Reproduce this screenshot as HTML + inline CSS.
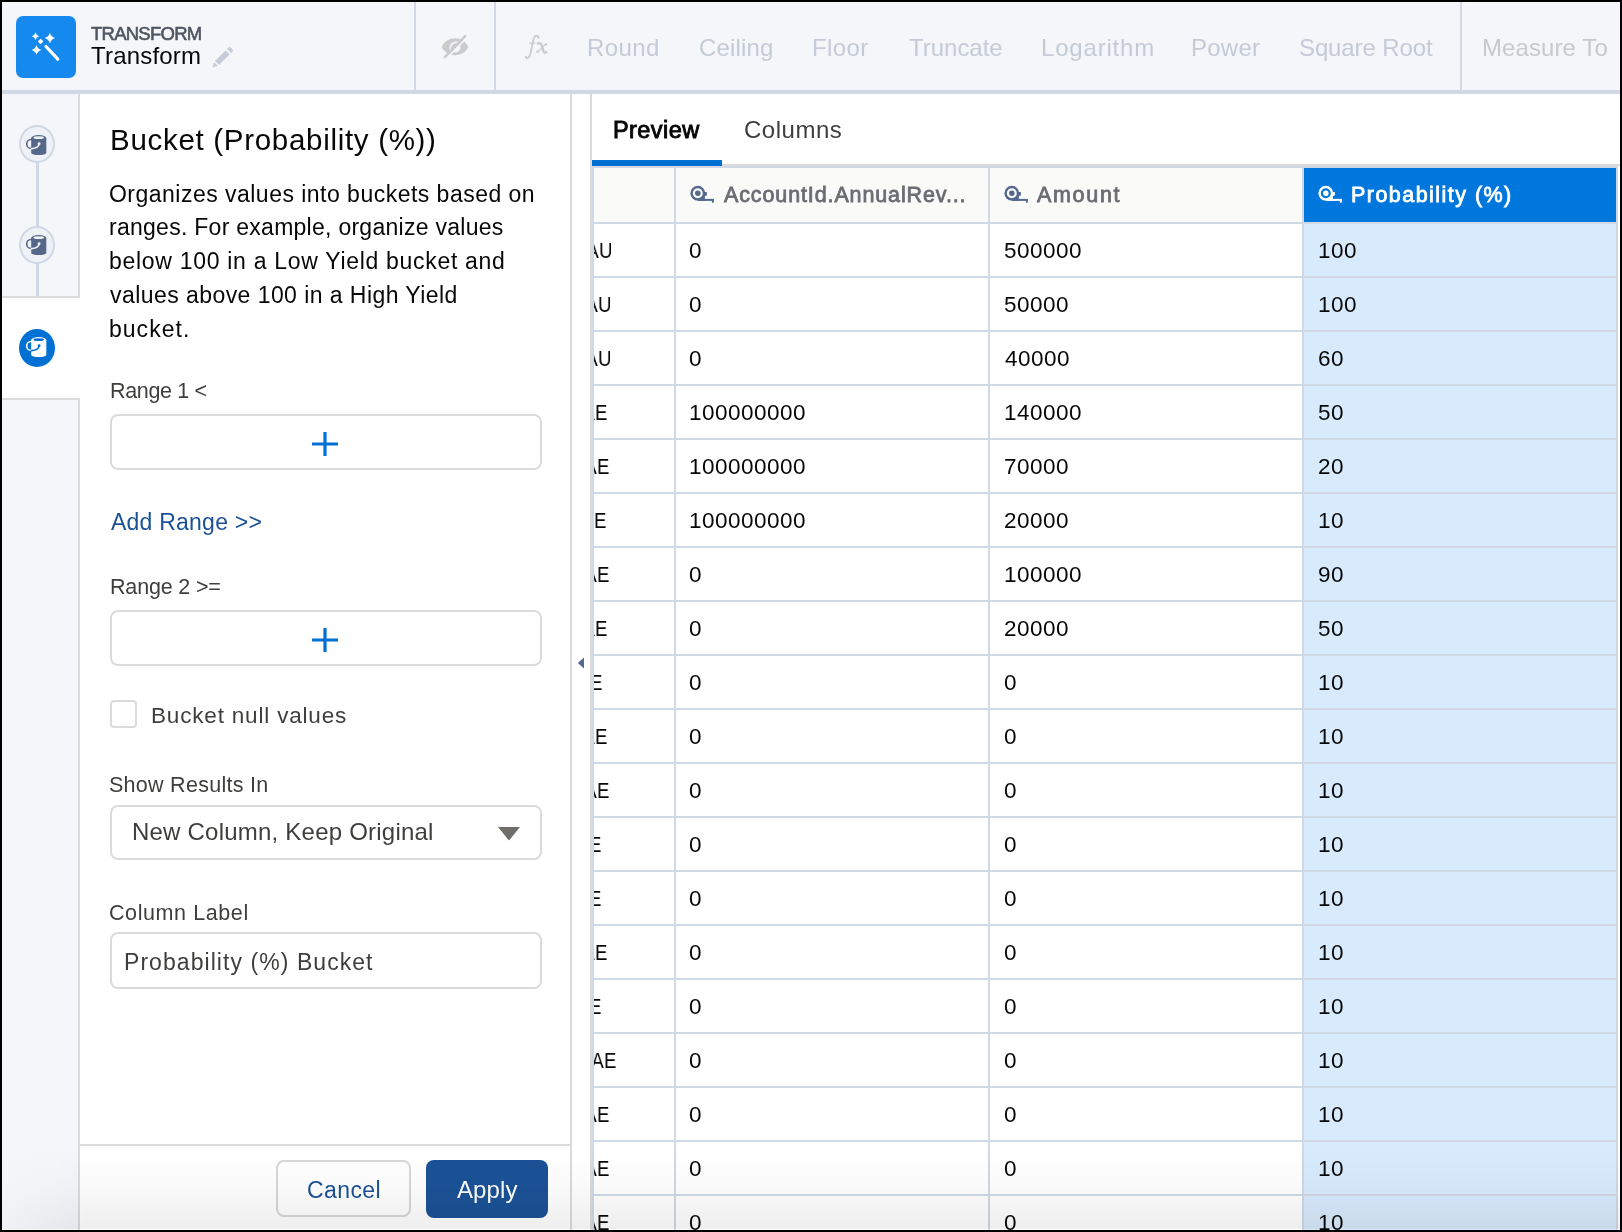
<!DOCTYPE html>
<html><head><meta charset="utf-8">
<style>
html,body{margin:0;padding:0;}
body{width:1622px;height:1232px;background:#000;position:relative;overflow:hidden;font-family:"Liberation Sans",sans-serif;}
#app{position:absolute;left:2px;top:2px;width:1618px;height:1228px;background:#fff;overflow:hidden;}
.a{position:absolute;}
.t{position:absolute;white-space:nowrap;line-height:1;font-family:"Liberation Sans",sans-serif;will-change:transform;}
.circ{position:absolute;width:37px;height:37px;border-radius:50%;}
</style></head>
<body>
<div id="app">
<div class="a" style="left:0px;top:0px;width:1618px;height:88px;background:#f4f6f9"></div>
<div class="a" style="left:0px;top:88px;width:1618px;height:4px;background:#d0d8e6"></div>
<div class="a" style="left:14px;top:14px;width:60px;height:62px;background:#1589ee;border-radius:7px"></div>
<svg class="a" style="left:14px;top:14px" width="60" height="62" viewBox="0 0 60 62">
<path fill="#fff" d="M19.50 16.60 Q20.31 19.49 23.20 20.30 Q20.31 21.11 19.50 24.00 Q18.69 21.11 15.80 20.30 Q18.69 19.49 19.50 16.60Z M33.90 16.80 Q35.07 20.93 39.20 22.10 Q35.07 23.27 33.90 27.40 Q32.73 23.27 28.60 22.10 Q32.73 20.93 33.90 16.80Z M20.50 29.00 Q21.58 32.82 25.40 33.90 Q21.58 34.98 20.50 38.80 Q19.42 34.98 15.60 33.90 Q19.42 32.82 20.50 29.00Z"/>
<rect x="22.6" y="23.4" width="4" height="4" rx="0.8" fill="#fff" transform="rotate(45 24.6 25.4)"/>
<line x1="30" y1="30.5" x2="41.8" y2="43.2" stroke="#fff" stroke-width="3.2" stroke-linecap="round"/>
</svg>
<svg class="a" style="left:209px;top:43px" width="24" height="24" viewBox="0 0 24 24">
<path fill="#c5ccd8" d="M17.6 2.4 Q18.6 1.6 19.6 2.4 L21.6 4.4 Q22.4 5.4 21.6 6.4 L20 8 L16 4Z M14.6 5.4 L18.6 9.4 L8 20 L4 16Z M3.2 17.2 L6.8 20.8 L1.6 22.4Z"/>
</svg>
<div class="a" style="left:412px;top:0px;width:2px;height:88px;background:#d2d8e8"></div>
<div class="a" style="left:492px;top:0px;width:2px;height:88px;background:#d2d8e8"></div>
<div class="a" style="left:1458px;top:0px;width:2px;height:88px;background:#d2d8e8"></div>
<svg class="a" style="left:434px;top:28px" width="38" height="32" viewBox="436 30 38 32">
<defs>
<mask id="eyeA" maskUnits="userSpaceOnUse" x="436" y="30" width="38" height="32"><rect x="436" y="30" width="38" height="32" fill="#fff"/><polygon points="438.71,65.13 473.08,29.92 501.70,57.86 467.33,93.07" fill="#000"/><path d="M450.3 49 A5.8 5.8 0 0 1 456.9 42.4" stroke="#000" stroke-width="1.7" fill="none" stroke-linecap="round"/></mask>
<mask id="eyeB" maskUnits="userSpaceOnUse" x="436" y="30" width="38" height="32"><rect x="436" y="30" width="38" height="32" fill="#fff"/><polygon points="439.96,66.35 474.33,31.14 445.71,3.20 411.34,38.41" fill="#000"/><circle cx="455.6" cy="47.6" r="4.8" fill="#000"/></mask>
</defs>
<path fill="#cbcbcb" mask="url(#eyeA)" d="M441.8 47 C446.5 35.4 463.5 35.4 468.2 47 C463.5 58 446.5 58 441.8 47Z"/>
<path fill="#cbcbcb" mask="url(#eyeB)" d="M441.8 47 C446.5 35.4 463.5 35.4 468.2 47 C463.5 58 446.5 58 441.8 47Z"/>
<line x1="444.8" y1="57.1" x2="465.2" y2="36.2" stroke="#cbcbcb" stroke-width="2.5" stroke-linecap="round"/>
</svg>
<svg class="a" style="left:513px;top:26px" width="45" height="38" viewBox="515 28 45 38">
<g fill="none" stroke="#cbcbcb" stroke-linecap="round">
<path d="M538.4 37.4 C537.9 35.2 535.6 35.0 534.3 37.3 C532.8 40.2 531.9 47 530.7 52.8 C529.8 57.4 527.9 59.0 526.1 57.7" stroke-width="1.8"/>
<path d="M529.4 43.1 H535.0" stroke-width="1.1"/>
<path d="M537.9 43.4 C540.6 42.6 541.6 44.3 542.2 46.6 L543.2 50.6 C543.8 52.9 545.0 53.0 546.2 52.1" stroke-width="2.4"/>
<path d="M546.0 44.2 L537.3 52.1" stroke-width="1.1"/>
</g>
<g fill="#cbcbcb"><circle cx="538.3" cy="37.6" r="1.15"/><circle cx="526.0" cy="57.2" r="1.15"/><circle cx="546.0" cy="44.4" r="1.2"/><circle cx="537.5" cy="51.7" r="1.25"/></g>
</svg>
<div class="a" style="left:0px;top:92px;width:76px;height:1136px;background:#f4f6f9"></div>
<div class="a" style="left:76px;top:92px;width:2px;height:1136px;background:#dddbda"></div>
<div class="a" style="left:34px;top:158px;width:3px;height:70px;background:#d0d8e6"></div>
<div class="a" style="left:34px;top:260px;width:3px;height:36px;background:#d0d8e6"></div>
<div class="a" style="left:0px;top:294px;width:78px;height:2px;background:#dddbda"></div>
<div class="a" style="left:0px;top:296px;width:80px;height:100px;background:#fff"></div>
<div class="a" style="left:0px;top:396px;width:78px;height:2px;background:#dddbda"></div>
<div class="a" style="left:17px;top:122.8px;width:32px;height:34px;border-radius:50%;border:2px solid #d0d8e6;background:#eef1f6"></div>
<div class="a" style="left:17px;top:224px;width:32px;height:34px;border-radius:50%;border:2px solid #d0d8e6;background:#eef1f6"></div>
<div class="a" style="left:16.5px;top:326.6px;width:36.5px;height:38.5px;border-radius:50%;background:#0070d2"></div>
<svg class="a" style="left:24.0px;top:132.0px" width="22" height="22" viewBox="-5.2 -1 22 22"><ellipse cx="-0.3" cy="8.9" rx="4.2" ry="4.4" fill="none" stroke="#56688a" stroke-width="1.6"/><path d="M0 3 H15.1 V18 A7.55 2 0 0 1 0 18Z" fill="#56688a"/><ellipse cx="7.55" cy="3" rx="7.6" ry="3" fill="#56688a"/><ellipse cx="7.55" cy="2.7" rx="5.3" ry="1.4" fill="#eef1f6"/><path d="M7.8 8.8 Q7.6 13.2 0.3 13.6" fill="none" stroke="#eef1f6" stroke-width="1.6" stroke-linecap="round"/><circle cx="7.9" cy="8.8" r="1.45" fill="#eef1f6"/></svg>
<svg class="a" style="left:24.0px;top:232.0px" width="22" height="22" viewBox="-5.2 -1 22 22"><ellipse cx="-0.3" cy="8.9" rx="4.2" ry="4.4" fill="none" stroke="#56688a" stroke-width="1.6"/><path d="M0 3 H15.1 V18 A7.55 2 0 0 1 0 18Z" fill="#56688a"/><ellipse cx="7.55" cy="3" rx="7.6" ry="3" fill="#56688a"/><ellipse cx="7.55" cy="2.7" rx="5.3" ry="1.4" fill="#eef1f6"/><path d="M7.8 8.8 Q7.6 13.2 0.3 13.6" fill="none" stroke="#eef1f6" stroke-width="1.6" stroke-linecap="round"/><circle cx="7.9" cy="8.8" r="1.45" fill="#eef1f6"/></svg>
<svg class="a" style="left:24.0px;top:333.9px" width="22" height="22" viewBox="-5.2 -1 22 22"><ellipse cx="-0.3" cy="8.9" rx="4.2" ry="4.4" fill="none" stroke="#fff" stroke-width="1.6"/><path d="M0 3 H15.1 V18 A7.55 2 0 0 1 0 18Z" fill="#fff"/><ellipse cx="7.55" cy="3" rx="7.6" ry="3" fill="#fff"/><ellipse cx="7.55" cy="2.7" rx="5.3" ry="1.4" fill="#0070d2"/><path d="M7.8 8.8 Q7.6 13.2 0.3 13.6" fill="none" stroke="#0070d2" stroke-width="1.6" stroke-linecap="round"/><circle cx="7.9" cy="8.8" r="1.45" fill="#0070d2"/></svg>
<div class="a" style="left:568px;top:92px;width:2px;height:1136px;background:#dddbda"></div>
<div class="a" style="left:108px;top:412px;width:428px;height:52px;border:2px solid #dbdbdb;border-radius:8px;background:#fff"></div>
<div class="a" style="left:108px;top:608px;width:428px;height:52px;border:2px solid #dbdbdb;border-radius:8px;background:#fff"></div>
<div class="a" style="left:108px;top:803px;width:428px;height:51px;border:2px solid #dbdbdb;border-radius:8px;background:#fff"></div>
<div class="a" style="left:108px;top:930px;width:428px;height:53px;border:2px solid #dbdbdb;border-radius:8px;background:#fff"></div>
<svg class="a" style="left:310px;top:430px" width="26" height="24" viewBox="0 0 26 24"><path d="M13 0.5 V23.5 M0.5 12 H25.5" stroke="#0070d2" stroke-width="3.2" stroke-linecap="round" fill="none"/></svg>
<svg class="a" style="left:310px;top:626px" width="26" height="24" viewBox="0 0 26 24"><path d="M13 0.5 V23.5 M0.5 12 H25.5" stroke="#0070d2" stroke-width="3.2" stroke-linecap="round" fill="none"/></svg>
<div class="a" style="left:108px;top:698px;width:23px;height:24px;border:2px solid #dbdbdb;border-radius:4px;background:#fff"></div>
<svg class="a" style="left:494px;top:823px" width="26" height="16" viewBox="0 0 26 16"><path d="M2 2 H24 L13 15.5Z" fill="#706e6b"/></svg>
<div class="a" style="left:78px;top:1142px;width:490px;height:2px;background:#dddbda"></div>
<div class="a" style="left:274px;top:1158px;width:131px;height:53px;border:2px solid #d8d8d8;border-radius:8px;background:#fff"></div>
<div class="a" style="left:424px;top:1158px;width:122px;height:58px;background:#1b5297;border-radius:8px"></div>
<div class="a" style="left:588px;top:92px;width:2px;height:1136px;background:#dddbda"></div>
<div class="a" style="left:590px;top:164px;width:2px;height:1064px;background:#d0d8e6"></div>
<svg class="a" style="left:575px;top:655px" width="8" height="12" viewBox="0 0 8 12"><path d="M7 0.5 V11.5 L0.8 6Z" fill="#54698d"/></svg>
<div class="a" style="left:590px;top:162px;width:1028px;height:2px;background:#dddbda"></div>
<div class="a" style="left:590px;top:158px;width:130px;height:6px;background:#0070d2"></div>
<div class="a" style="left:590px;top:164px;width:1026px;height:2px;background:#d0d8e6"></div>
<div class="a" style="left:592px;top:166px;width:1024px;height:54px;background:#fafaf9"></div>
<div class="a" style="left:1302px;top:166px;width:312px;height:54px;background:#0077dc"></div>
<div class="a" style="left:1302px;top:222px;width:312px;height:1006px;background:#d8ebfc"></div>
<div class="a" style="left:592px;top:220px;width:1024px;height:2px;background:#d0d8e6"></div>
<div class="a" style="left:592px;top:274px;width:1024px;height:2px;background:#d0d8e6"></div>
<div class="a" style="left:592px;top:328px;width:1024px;height:2px;background:#d0d8e6"></div>
<div class="a" style="left:592px;top:382px;width:1024px;height:2px;background:#d0d8e6"></div>
<div class="a" style="left:592px;top:436px;width:1024px;height:2px;background:#d0d8e6"></div>
<div class="a" style="left:592px;top:490px;width:1024px;height:2px;background:#d0d8e6"></div>
<div class="a" style="left:592px;top:544px;width:1024px;height:2px;background:#d0d8e6"></div>
<div class="a" style="left:592px;top:598px;width:1024px;height:2px;background:#d0d8e6"></div>
<div class="a" style="left:592px;top:652px;width:1024px;height:2px;background:#d0d8e6"></div>
<div class="a" style="left:592px;top:706px;width:1024px;height:2px;background:#d0d8e6"></div>
<div class="a" style="left:592px;top:760px;width:1024px;height:2px;background:#d0d8e6"></div>
<div class="a" style="left:592px;top:814px;width:1024px;height:2px;background:#d0d8e6"></div>
<div class="a" style="left:592px;top:868px;width:1024px;height:2px;background:#d0d8e6"></div>
<div class="a" style="left:592px;top:922px;width:1024px;height:2px;background:#d0d8e6"></div>
<div class="a" style="left:592px;top:976px;width:1024px;height:2px;background:#d0d8e6"></div>
<div class="a" style="left:592px;top:1030px;width:1024px;height:2px;background:#d0d8e6"></div>
<div class="a" style="left:592px;top:1084px;width:1024px;height:2px;background:#d0d8e6"></div>
<div class="a" style="left:592px;top:1138px;width:1024px;height:2px;background:#d0d8e6"></div>
<div class="a" style="left:592px;top:1192px;width:1024px;height:2px;background:#d0d8e6"></div>
<div class="a" style="left:592px;top:1246px;width:1024px;height:2px;background:#d0d8e6"></div>
<div class="a" style="left:672px;top:166px;width:2px;height:1062px;background:#d0d8e6"></div>
<div class="a" style="left:986px;top:166px;width:2px;height:1062px;background:#d0d8e6"></div>
<div class="a" style="left:1300px;top:166px;width:2px;height:1062px;background:#d0d8e6"></div>
<div class="a" style="left:1614px;top:166px;width:2px;height:1062px;background:#d0d8e6"></div>
<svg class="a" style="left:688px;top:183px" width="25" height="19" viewBox="0 0 25 19"><circle cx="7.8" cy="8.2" r="7.4" fill="#54698d"/><rect x="7.8" y="8.2" width="7.1" height="7.6" fill="#54698d"/><rect x="14.4" y="7" width="2.5" height="3.7" rx="0.6" fill="#54698d"/><rect x="7.8" y="13.9" width="16" height="2" fill="#54698d"/><rect x="21.9" y="13.9" width="1.9" height="3.8" rx="0.5" fill="#54698d"/><circle cx="7.8" cy="8.2" r="3.9" fill="none" stroke="#fafaf9" stroke-width="2.2"/></svg>
<svg class="a" style="left:1002px;top:183px" width="25" height="19" viewBox="0 0 25 19"><circle cx="7.8" cy="8.2" r="7.4" fill="#54698d"/><rect x="7.8" y="8.2" width="7.1" height="7.6" fill="#54698d"/><rect x="14.4" y="7" width="2.5" height="3.7" rx="0.6" fill="#54698d"/><rect x="7.8" y="13.9" width="16" height="2" fill="#54698d"/><rect x="21.9" y="13.9" width="1.9" height="3.8" rx="0.5" fill="#54698d"/><circle cx="7.8" cy="8.2" r="3.9" fill="none" stroke="#fafaf9" stroke-width="2.2"/></svg>
<svg class="a" style="left:1316px;top:183px" width="25" height="19" viewBox="0 0 25 19"><circle cx="7.8" cy="8.2" r="7.4" fill="#fff"/><rect x="7.8" y="8.2" width="7.1" height="7.6" fill="#fff"/><rect x="14.4" y="7" width="2.5" height="3.7" rx="0.6" fill="#fff"/><rect x="7.8" y="13.9" width="16" height="2" fill="#fff"/><rect x="21.9" y="13.9" width="1.9" height="3.8" rx="0.5" fill="#fff"/><circle cx="7.8" cy="8.2" r="3.9" fill="none" stroke="#0077dc" stroke-width="2.2"/></svg>
<div class="a" style="left:592px;top:222px;width:80px;height:1006px;overflow:hidden"><div class="t" style="left:-13.2px;top:16px;font-size:22.5px;letter-spacing:0.5px;color:#080707;transform:scaleX(0.82);transform-origin:30.0px 50%">AU</div><div class="t" style="left:-14.1px;top:70px;font-size:22.5px;letter-spacing:0.5px;color:#080707;transform:scaleX(0.82);transform-origin:30.0px 50%">AU</div><div class="t" style="left:-13.7px;top:124px;font-size:22.5px;letter-spacing:0.5px;color:#080707;transform:scaleX(0.82);transform-origin:30.0px 50%">AU</div><div class="t" style="left:-17.0px;top:178px;font-size:22.5px;letter-spacing:0.5px;color:#080707;transform:scaleX(0.82);transform-origin:30.0px 50%">AE</div><div class="t" style="left:-15.3px;top:232px;font-size:22.5px;letter-spacing:0.5px;color:#080707;transform:scaleX(0.82);transform-origin:30.0px 50%">AE</div><div class="t" style="left:-17.6px;top:286px;font-size:22.5px;letter-spacing:0.5px;color:#080707;transform:scaleX(0.82);transform-origin:30.0px 50%">AE</div><div class="t" style="left:-15.3px;top:340px;font-size:22.5px;letter-spacing:0.5px;color:#080707;transform:scaleX(0.82);transform-origin:30.0px 50%">AE</div><div class="t" style="left:-16.7px;top:394px;font-size:22.5px;letter-spacing:0.5px;color:#080707;transform:scaleX(0.82);transform-origin:30.0px 50%">AE</div><div class="t" style="left:-22.0px;top:448px;font-size:22.5px;letter-spacing:0.5px;color:#080707;transform:scaleX(0.82);transform-origin:30.0px 50%">AE</div><div class="t" style="left:-17.0px;top:502px;font-size:22.5px;letter-spacing:0.5px;color:#080707;transform:scaleX(0.82);transform-origin:30.0px 50%">AE</div><div class="t" style="left:-15.3px;top:556px;font-size:22.5px;letter-spacing:0.5px;color:#080707;transform:scaleX(0.82);transform-origin:30.0px 50%">AE</div><div class="t" style="left:-22.8px;top:610px;font-size:22.5px;letter-spacing:0.5px;color:#080707;transform:scaleX(0.82);transform-origin:30.0px 50%">AE</div><div class="t" style="left:-22.8px;top:664px;font-size:22.5px;letter-spacing:0.5px;color:#080707;transform:scaleX(0.82);transform-origin:30.0px 50%">AE</div><div class="t" style="left:-17.0px;top:718px;font-size:22.5px;letter-spacing:0.5px;color:#080707;transform:scaleX(0.82);transform-origin:30.0px 50%">AE</div><div class="t" style="left:-22.8px;top:772px;font-size:22.5px;letter-spacing:0.5px;color:#080707;transform:scaleX(0.82);transform-origin:30.0px 50%">AE</div><div class="t" style="left:-8.3px;top:826px;font-size:22.5px;letter-spacing:0.5px;color:#080707;transform:scaleX(0.82);transform-origin:30.0px 50%">AE</div><div class="t" style="left:-15.2px;top:880px;font-size:22.5px;letter-spacing:0.5px;color:#080707;transform:scaleX(0.82);transform-origin:30.0px 50%">AE</div><div class="t" style="left:-15.2px;top:934px;font-size:22.5px;letter-spacing:0.5px;color:#080707;transform:scaleX(0.82);transform-origin:30.0px 50%">AE</div><div class="t" style="left:-15.2px;top:988px;font-size:22.5px;letter-spacing:0.5px;color:#080707;transform:scaleX(0.82);transform-origin:30.0px 50%">AE</div></div>
<div class="t" style="left:89.3px;top:23px;font-size:18.5px;color:#4f5660;letter-spacing:-0.75px;-webkit-text-stroke:0.6px #4f5660">TRANSFORM</div>
<div class="t" style="left:89.3px;top:42px;font-size:24px;color:#080707;letter-spacing:0.19px">Transform</div>
<div class="t" style="left:585.0px;top:34px;font-size:24px;color:#c4cbd6;letter-spacing:0.4px">Round</div>
<div class="t" style="left:696.9px;top:34px;font-size:24px;color:#c4cbd6;letter-spacing:0.15px">Ceiling</div>
<div class="t" style="left:809.7px;top:34px;font-size:24px;color:#c4cbd6;letter-spacing:0.41px">Floor</div>
<div class="t" style="left:906.5px;top:34px;font-size:24px;color:#c4cbd6;letter-spacing:-0.02px">Truncate</div>
<div class="t" style="left:1038.8px;top:34px;font-size:24px;color:#c4cbd6;letter-spacing:0.81px">Logarithm</div>
<div class="t" style="left:1189.0px;top:34px;font-size:24px;color:#c4cbd6;letter-spacing:0.25px">Power</div>
<div class="t" style="left:1297.0px;top:34px;font-size:24px;color:#c4cbd6;letter-spacing:-0.12px">Square Root</div>
<div class="t" style="left:1480.4px;top:34px;font-size:24px;color:#c9c9c9;letter-spacing:0.09px">Measure To</div>
<div class="t" style="left:107.8px;top:123px;font-size:29.5px;color:#080707;letter-spacing:0.7px">Bucket (Probability (%))</div>
<div class="t" style="left:107.3px;top:181px;font-size:23px;color:#080707;letter-spacing:0.48px">Organizes values into buckets based on</div>
<div class="t" style="left:107.3px;top:214px;font-size:23px;color:#080707;letter-spacing:0.27px">ranges. For example, organize values</div>
<div class="t" style="left:107.3px;top:248px;font-size:23px;color:#080707;letter-spacing:0.7px">below 100 in a Low Yield bucket and</div>
<div class="t" style="left:108.3px;top:282px;font-size:23px;color:#080707;letter-spacing:0.44px">values above 100 in a High Yield</div>
<div class="t" style="left:107.3px;top:316px;font-size:23px;color:#080707;letter-spacing:1.02px">bucket.</div>
<div class="t" style="left:108.0px;top:379px;font-size:21.5px;color:#3e3e3c;letter-spacing:-0.34px">Range 1 &lt;</div>
<div class="t" style="left:109.1px;top:509px;font-size:23px;color:#1b5297;letter-spacing:0.23px">Add Range &gt;&gt;</div>
<div class="t" style="left:107.5px;top:575px;font-size:21.5px;color:#3e3e3c;letter-spacing:-0.17px">Range 2 &gt;=</div>
<div class="t" style="left:149.3px;top:703px;font-size:22.5px;color:#3e3e3c;letter-spacing:0.82px">Bucket null values</div>
<div class="t" style="left:107.0px;top:773px;font-size:21.5px;color:#3e3e3c;letter-spacing:0.27px">Show Results In</div>
<div class="t" style="left:129.5px;top:818px;font-size:24px;color:#3e3e3c;letter-spacing:0.22px">New Column, Keep Original</div>
<div class="t" style="left:107.0px;top:901px;font-size:21.5px;color:#3e3e3c;letter-spacing:0.59px">Column Label</div>
<div class="t" style="left:122.0px;top:949px;font-size:23px;color:#3e3e3c;letter-spacing:1.06px">Probability (%) Bucket</div>
<div class="t" style="left:304.8px;top:1177px;font-size:23px;color:#1b5297;letter-spacing:0.42px">Cancel</div>
<div class="t" style="left:454.6px;top:1176px;font-size:24px;color:#fff;letter-spacing:0.1px">Apply</div>
<div class="t" style="left:611.3px;top:117px;font-size:23.5px;color:#080707;letter-spacing:0.43px;-webkit-text-stroke:0.9px #080707">Preview</div>
<div class="t" style="left:741.5px;top:116px;font-size:24px;color:#3e3e3c;letter-spacing:0.52px">Columns</div>
<div class="t" style="left:721.8px;top:183px;font-size:21.5px;color:#6b6d72;letter-spacing:0.88px;-webkit-text-stroke:0.8px #6b6d72">AccountId.AnnualRev...</div>
<div class="t" style="left:1035.2px;top:183px;font-size:21.5px;color:#6b6d72;letter-spacing:1.68px;-webkit-text-stroke:0.8px #6b6d72">Amount</div>
<div class="t" style="left:1348.7px;top:183px;font-size:21.5px;color:#fff;letter-spacing:1.46px;-webkit-text-stroke:0.8px #fff">Probability (%)</div>
<div class="t" style="left:687.2px;top:238px;font-size:22.5px;color:#080707;letter-spacing:0.5px">0</div>
<div class="t" style="left:1001.8px;top:238px;font-size:22.5px;color:#080707;letter-spacing:0.5px">500000</div>
<div class="t" style="left:1316.4px;top:238px;font-size:22.5px;color:#080707;letter-spacing:0.5px">100</div>
<div class="t" style="left:687.2px;top:292px;font-size:22.5px;color:#080707;letter-spacing:0.5px">0</div>
<div class="t" style="left:1001.8px;top:292px;font-size:22.5px;color:#080707;letter-spacing:0.5px">50000</div>
<div class="t" style="left:1316.4px;top:292px;font-size:22.5px;color:#080707;letter-spacing:0.5px">100</div>
<div class="t" style="left:687.2px;top:346px;font-size:22.5px;color:#080707;letter-spacing:0.5px">0</div>
<div class="t" style="left:1002.8px;top:346px;font-size:22.5px;color:#080707;letter-spacing:0.5px">40000</div>
<div class="t" style="left:1316.4px;top:346px;font-size:22.5px;color:#080707;letter-spacing:0.5px">60</div>
<div class="t" style="left:687.2px;top:400px;font-size:22.5px;color:#080707;letter-spacing:0.5px">100000000</div>
<div class="t" style="left:1001.8px;top:400px;font-size:22.5px;color:#080707;letter-spacing:0.5px">140000</div>
<div class="t" style="left:1316.4px;top:400px;font-size:22.5px;color:#080707;letter-spacing:0.5px">50</div>
<div class="t" style="left:687.2px;top:454px;font-size:22.5px;color:#080707;letter-spacing:0.5px">100000000</div>
<div class="t" style="left:1001.8px;top:454px;font-size:22.5px;color:#080707;letter-spacing:0.5px">70000</div>
<div class="t" style="left:1316.4px;top:454px;font-size:22.5px;color:#080707;letter-spacing:0.5px">20</div>
<div class="t" style="left:687.2px;top:508px;font-size:22.5px;color:#080707;letter-spacing:0.5px">100000000</div>
<div class="t" style="left:1001.8px;top:508px;font-size:22.5px;color:#080707;letter-spacing:0.5px">20000</div>
<div class="t" style="left:1316.4px;top:508px;font-size:22.5px;color:#080707;letter-spacing:0.5px">10</div>
<div class="t" style="left:687.2px;top:562px;font-size:22.5px;color:#080707;letter-spacing:0.5px">0</div>
<div class="t" style="left:1001.8px;top:562px;font-size:22.5px;color:#080707;letter-spacing:0.5px">100000</div>
<div class="t" style="left:1316.4px;top:562px;font-size:22.5px;color:#080707;letter-spacing:0.5px">90</div>
<div class="t" style="left:687.2px;top:616px;font-size:22.5px;color:#080707;letter-spacing:0.5px">0</div>
<div class="t" style="left:1001.8px;top:616px;font-size:22.5px;color:#080707;letter-spacing:0.5px">20000</div>
<div class="t" style="left:1316.4px;top:616px;font-size:22.5px;color:#080707;letter-spacing:0.5px">50</div>
<div class="t" style="left:687.2px;top:670px;font-size:22.5px;color:#080707;letter-spacing:0.5px">0</div>
<div class="t" style="left:1001.8px;top:670px;font-size:22.5px;color:#080707;letter-spacing:0.5px">0</div>
<div class="t" style="left:1316.4px;top:670px;font-size:22.5px;color:#080707;letter-spacing:0.5px">10</div>
<div class="t" style="left:687.2px;top:724px;font-size:22.5px;color:#080707;letter-spacing:0.5px">0</div>
<div class="t" style="left:1001.8px;top:724px;font-size:22.5px;color:#080707;letter-spacing:0.5px">0</div>
<div class="t" style="left:1316.4px;top:724px;font-size:22.5px;color:#080707;letter-spacing:0.5px">10</div>
<div class="t" style="left:687.2px;top:778px;font-size:22.5px;color:#080707;letter-spacing:0.5px">0</div>
<div class="t" style="left:1001.8px;top:778px;font-size:22.5px;color:#080707;letter-spacing:0.5px">0</div>
<div class="t" style="left:1316.4px;top:778px;font-size:22.5px;color:#080707;letter-spacing:0.5px">10</div>
<div class="t" style="left:687.2px;top:832px;font-size:22.5px;color:#080707;letter-spacing:0.5px">0</div>
<div class="t" style="left:1001.8px;top:832px;font-size:22.5px;color:#080707;letter-spacing:0.5px">0</div>
<div class="t" style="left:1316.4px;top:832px;font-size:22.5px;color:#080707;letter-spacing:0.5px">10</div>
<div class="t" style="left:687.2px;top:886px;font-size:22.5px;color:#080707;letter-spacing:0.5px">0</div>
<div class="t" style="left:1001.8px;top:886px;font-size:22.5px;color:#080707;letter-spacing:0.5px">0</div>
<div class="t" style="left:1316.4px;top:886px;font-size:22.5px;color:#080707;letter-spacing:0.5px">10</div>
<div class="t" style="left:687.2px;top:940px;font-size:22.5px;color:#080707;letter-spacing:0.5px">0</div>
<div class="t" style="left:1001.8px;top:940px;font-size:22.5px;color:#080707;letter-spacing:0.5px">0</div>
<div class="t" style="left:1316.4px;top:940px;font-size:22.5px;color:#080707;letter-spacing:0.5px">10</div>
<div class="t" style="left:687.2px;top:994px;font-size:22.5px;color:#080707;letter-spacing:0.5px">0</div>
<div class="t" style="left:1001.8px;top:994px;font-size:22.5px;color:#080707;letter-spacing:0.5px">0</div>
<div class="t" style="left:1316.4px;top:994px;font-size:22.5px;color:#080707;letter-spacing:0.5px">10</div>
<div class="t" style="left:687.2px;top:1048px;font-size:22.5px;color:#080707;letter-spacing:0.5px">0</div>
<div class="t" style="left:1001.8px;top:1048px;font-size:22.5px;color:#080707;letter-spacing:0.5px">0</div>
<div class="t" style="left:1316.4px;top:1048px;font-size:22.5px;color:#080707;letter-spacing:0.5px">10</div>
<div class="t" style="left:687.2px;top:1102px;font-size:22.5px;color:#080707;letter-spacing:0.5px">0</div>
<div class="t" style="left:1001.8px;top:1102px;font-size:22.5px;color:#080707;letter-spacing:0.5px">0</div>
<div class="t" style="left:1316.4px;top:1102px;font-size:22.5px;color:#080707;letter-spacing:0.5px">10</div>
<div class="t" style="left:687.2px;top:1156px;font-size:22.5px;color:#080707;letter-spacing:0.5px">0</div>
<div class="t" style="left:1001.8px;top:1156px;font-size:22.5px;color:#080707;letter-spacing:0.5px">0</div>
<div class="t" style="left:1316.4px;top:1156px;font-size:22.5px;color:#080707;letter-spacing:0.5px">10</div>
<div class="t" style="left:687.2px;top:1210px;font-size:22.5px;color:#080707;letter-spacing:0.5px">0</div>
<div class="t" style="left:1001.8px;top:1210px;font-size:22.5px;color:#080707;letter-spacing:0.5px">0</div>
<div class="t" style="left:1316.4px;top:1210px;font-size:22.5px;color:#080707;letter-spacing:0.5px">10</div>
<div class="a" style="left:0;top:1148px;width:1618px;height:79px;background:linear-gradient(to bottom,rgba(0,0,0,0),rgba(0,0,0,0.025) 50%,rgba(0,0,0,0.065));-webkit-mask-image:linear-gradient(to right,rgba(0,0,0,0.25),#000 85px)"></div>
</div>
</body></html>
